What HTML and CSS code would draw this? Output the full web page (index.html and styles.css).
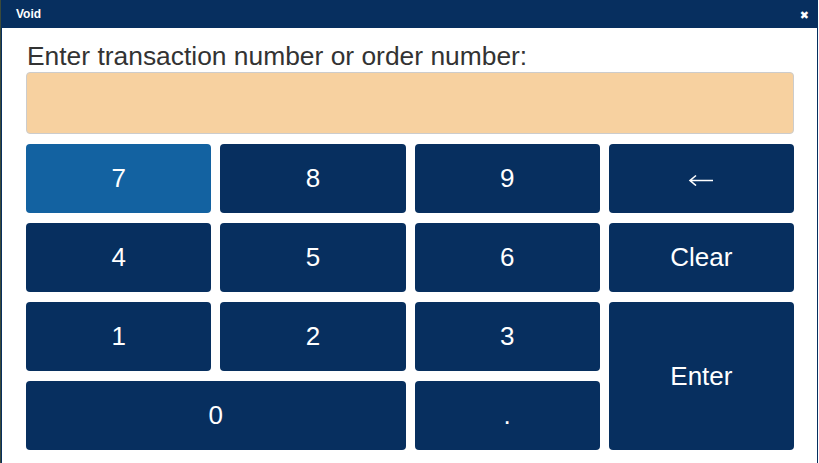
FILE: index.html
```html
<!DOCTYPE html>
<html lang="en">
<head>
<meta charset="utf-8">
<title>Void</title>
<link rel="stylesheet" href="styles.css">
</head>
<body>
<div class="dialog">
  <div class="dialog-title">
    <span class="title-text">Void</span>
    <span class="close">&#x2716;</span>
  </div>
  <div class="dialog-body">
    <label class="prompt" for="txn">Enter transaction number or order number:</label>
    <input class="entry" id="txn" type="text">
    <div class="keypad">
      <button class="key active">7</button>
      <button class="key">8</button>
      <button class="key">9</button>
      <button class="key" aria-label="Backspace">
        <svg class="arrow" width="26" height="12" viewBox="0 0 26 12">
          <path d="M25 6.5H2.5M8 1.5L2 6.5L8 11.5" fill="none" stroke="#ffffff" stroke-width="1.6"/>
        </svg>
      </button>
      <button class="key">4</button>
      <button class="key">5</button>
      <button class="key">6</button>
      <button class="key">Clear</button>
      <button class="key">1</button>
      <button class="key">2</button>
      <button class="key">3</button>
      <button class="key enter">Enter</button>
      <button class="key zero">0</button>
      <button class="key">.</button>
    </div>
  </div>
</div>
</body>
</html>
```

FILE: styles.css
```css
html, body {
  margin: 0;
  padding: 0;
  height: 100%;
  background: #ffffff;
}

body {
  border-left: 1px solid #3b4a3a;
  box-sizing: border-box;
  font-family: "Liberation Sans", Arial, sans-serif;
  overflow: hidden;
}

.dialog {
  width: 817px;
  height: 463px;
  box-sizing: border-box;
  border-left: 1px solid #072f5f;
  border-right: 1px solid #072f5f;
  background: #ffffff;
  display: flex;
  flex-direction: column;
}

.dialog-title {
  height: 28px;
  background: #072f5f;
  color: #ffffff;
  display: flex;
  align-items: center;
  justify-content: space-between;
  padding: 0 8px 0 14px;
  flex: none;
}

.title-text {
  font-weight: bold;
  font-size: 12px;
}

.close {
  font-size: 11px;
  font-family: "DejaVu Sans", sans-serif;
  font-weight: bold;
  margin-top: 3px;
}

.dialog-body {
  padding: 13px 23px 12px 24px;
  display: flex;
  flex-direction: column;
}

.prompt {
  font-size: 26.4px;
  line-height: 30px;
  color: #333333;
  margin-bottom: 1px;
  padding-left: 1px;
}

.entry {
  height: 62px;
  box-sizing: border-box;
  border: 1px solid #cccccc;
  border-radius: 4px;
  background: #f7d1a0;
  margin: 0 0 10px 0;
  padding: 0 12px;
  font-size: 26px;
  outline: none;
}

.keypad {
  display: grid;
  grid-template-columns: repeat(4, 1fr);
  grid-auto-rows: 69px;
  column-gap: 9px;
  row-gap: 10px;
}

.key {
  border: none;
  border-radius: 4px;
  background: #072f5f;
  color: #ffffff;
  font-family: "Liberation Sans", Arial, sans-serif;
  font-size: 26px;
  padding: 0;
  cursor: pointer;
}

.key.active {
  background: #1362a1;
}

.arrow {
  display: block;
  margin: 2px auto 0;
}

.key.enter {
  grid-column: 4;
  grid-row: 3 / span 2;
}

.key.zero {
  grid-column: 1 / span 2;
}
```
